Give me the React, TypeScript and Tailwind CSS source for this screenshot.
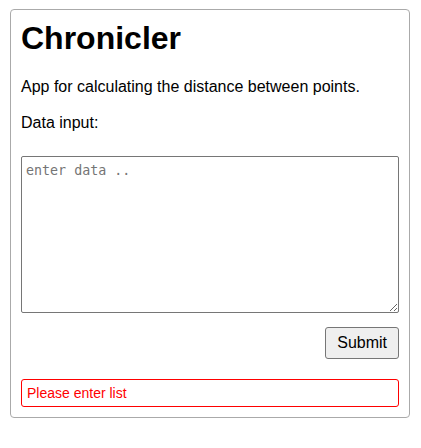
import React from "react";

export default function App() {
  return (
    <div className="pl-[10px] pt-[9px]" style={{ fontFamily: '"Liberation Sans", Arial, sans-serif' }}>
      <div className="w-[400px] border border-[#aaaaaa] rounded-[4px] p-[10px] text-black">
        <h1 className="text-[32px] font-bold leading-[37px]">Chronicler</h1>
        <p className="mt-[21px] text-[16px] leading-[18px]">App for calculating the distance between points.</p>
        <p className="mt-[18px] text-[16px] leading-[18px]">Data input:</p>
        <textarea
          className="mt-[24px] block w-full h-[157px] border border-[#767676] rounded-[2px] px-[4px] pt-[4px] pb-[2px] text-[13.33px] placeholder:text-[#757575] resize-y"
          style={{ fontFamily: '"DejaVu Sans Mono", monospace' }}
          placeholder="enter data .."
        />
        <div className="mt-[14px] flex justify-end">
          <button className="h-[32px] px-[11px] bg-[#efefef] border border-[#767676] rounded-[3px] text-[16px] text-black">
            Submit
          </button>
        </div>
        <div className="mt-[20px] h-[28px] border border-[#ff0000] rounded-[3px] px-[5px] flex items-center text-[14px] text-[#ff0000]">
          Please enter list
        </div>
      </div>
    </div>
  );
}
